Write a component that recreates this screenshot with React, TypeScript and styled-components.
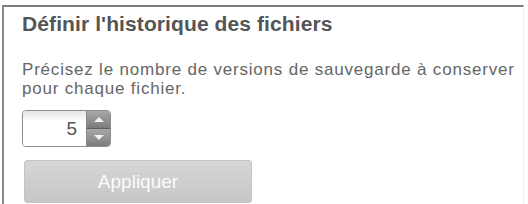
import React from "react";
import styled, { createGlobalStyle } from "styled-components";

const Global = createGlobalStyle`
  html, body { margin: 0; padding: 0; background: #fff; }
  body { font-family: "Liberation Sans", Arial, sans-serif; }
`;

const Panel = styled.section`
  margin: 5px 4px 0 2px;
  height: 199px;
  box-sizing: border-box;
  border-top: 2px solid #7c7c7c;
  border-left: 2px solid #8a8a8a;
  border-right: 1px solid #f0f0f0;
  padding: 5px 0 0 18px;
  display: flex;
  flex-direction: column;
  align-items: flex-start;
`;

const Title = styled.h2`
  margin: 0;
  font-size: 21px;
  font-weight: bold;
  color: #555;
  line-height: 24px;
  letter-spacing: 0.1px;
`;

const Desc = styled.p`
  margin: 24px 0 0;
  font-size: 17px;
  letter-spacing: 0.8px;
  color: #666;
  line-height: 19px;
  width: 495px;
`;

const Spinner = styled.div`
  margin-top: 12px;
  display: flex;
  width: 89px;
  height: 37px;
  box-sizing: border-box;
  border: 1px solid #8e8e8e;
  border-radius: 4px;
  overflow: hidden;
  background: #fff;
`;

const SpinValue = styled.div`
  flex: 1;
  display: flex;
  align-items: center;
  justify-content: flex-end;
  padding-right: 9px;
  font-size: 19px;
  color: #555;
  background: linear-gradient(#e4e4e4, #fff 30%);
`;

const SpinButtons = styled.div`
  width: 23px;
  display: flex;
  flex-direction: column;
  border-left: 1px solid #8a8a8a;
`;

const SpinBtn = styled.div<{ $down?: boolean }>`
  flex: 1;
  display: flex;
  align-items: center;
  justify-content: center;
  background: linear-gradient(#a8a8a8, #7c7c7c);
  border-top: ${(p) => (p.$down ? "1px solid #5e5e5e" : "none")};
`;

const Apply = styled.button`
  margin: 13px 0 0 2px;
  width: 228px;
  height: 43px;
  border: 1px solid #c4c4c4;
  border-radius: 3px;
  background: linear-gradient(#d6d6d6, #c6c6c6);
  color: #fbfbfb;
  font-family: "Liberation Sans", Arial, sans-serif;
  font-size: 19px;
  padding: 0;
`;

const Arrow = ({ down }: { down?: boolean }) => (
  <svg width="12" height="7" viewBox="0 0 12 7">
    <path d={down ? "M1 1 L11 1 L6 6 Z" : "M1 6 L11 6 L6 1 Z"} fill="#f2f2f2" />
  </svg>
);

export default function App() {
  return (
    <>
      <Global />
      <Panel>
        <Title>Définir l'historique des fichiers</Title>
        <Desc>
          Précisez le nombre de versions de sauvegarde à conserver pour chaque fichier.
        </Desc>
        <Spinner>
          <SpinValue>5</SpinValue>
          <SpinButtons>
            <SpinBtn>
              <Arrow />
            </SpinBtn>
            <SpinBtn $down>
              <Arrow down />
            </SpinBtn>
          </SpinButtons>
        </Spinner>
        <Apply>Appliquer</Apply>
      </Panel>
    </>
  );
}
